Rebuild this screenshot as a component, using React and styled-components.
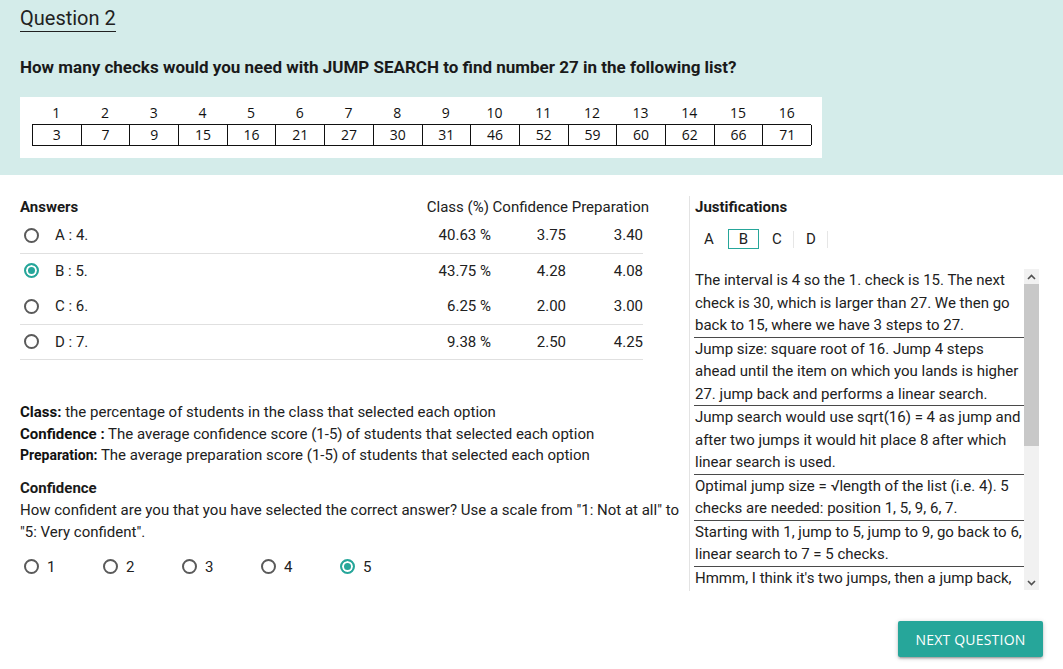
import React from "react";
import styled, { createGlobalStyle } from "styled-components";

const GlobalStyle = createGlobalStyle`
  html, body { margin: 0; padding: 0; background: #ffffff; }
  body {
    font-family: Roboto, "Noto Sans", sans-serif;
    color: #212121;
    width: 1063px;
    height: 669px;
    overflow: hidden;
  }
  * { box-sizing: border-box; }
`;

const TEAL = "#26a69a";

const Page = styled.div`
  width: 1063px;
  height: 669px;
  display: flex;
  flex-direction: column;
`;

const Band = styled.header`
  background: #d4ecea;
  padding: 6px 20px 17px;
  display: flex;
  flex-direction: column;
  align-items: flex-start;
`;

const Title = styled.h1`
  margin: 0;
  font-size: 20px;
  font-weight: 400;
  line-height: 24px;
  padding-bottom: 1px;
  border-bottom: 1px solid #212121;
  color: #212121;
`;

const QuestionText = styled.h2`
  margin: 24px 0 0;
  font-size: 17px;
  font-weight: 700;
  line-height: 22px;
  color: #1a1a1a;
`;

const ListBox = styled.div`
  margin-top: 19px;
  width: 802px;
  height: 61px;
  background: #ffffff;
  padding: 5px 11px 0 12px;
  font-family: "Open Sans", "Liberation Sans", sans-serif;
  font-size: 14px;
  color: #111;
`;

const IndexRow = styled.div`
  display: grid;
  grid-template-columns: repeat(16, 48.7px);
  height: 22px;
  line-height: 22px;
  text-align: center;
`;

const CellRow = styled.div`
  display: grid;
  grid-template-columns: repeat(16, 48.7px);
  border: 1px solid #111;
  border-right: none;
  height: 22px;
`;

const Cell = styled.div`
  border-right: 1px solid #111;
  text-align: center;
  line-height: 20px;
`;

const Main = styled.main`
  display: grid;
  grid-template-columns: 669px 354px;
  padding: 21px 0 0 20px;
`;

const LeftCol = styled.section`
  display: flex;
  flex-direction: column;
  padding-right: 4px;
`;

const HeadRow = styled.div`
  width: 627px;
  display: flex;
  justify-content: space-between;
  line-height: 22px;
  font-size: 15px;
`;

const Heading = styled.div`
  font-size: 15px;
  font-weight: 700;
  line-height: 22px;
  color: #1a1a1a;
`;

const ColHeads = styled.span`
  font-size: 15px;
  color: #212121;
  margin-right: -2px;
`;

const AnswerRow = styled.div`
  width: 623px;
  height: 35.5px;
  display: grid;
  grid-template-columns: 1fr 72px 75px 77px;
  align-items: center;
  border-bottom: 1px solid ${(p) => (p.$noLine ? "transparent" : "#e0e0e0")};
  font-size: 15px;
`;

const OptionLabel = styled.label`
  display: flex;
  align-items: center;
  gap: ${(p) => p.$gap}px;
  padding-left: 4px;
`;

const Radio = styled.span`
  width: 15px;
  height: 15px;
  border-radius: 50%;
  flex: none;
  border: 2px solid ${(p) => (p.$checked ? TEAL : "#5a5a5a")};
  background: ${(p) => (p.$checked ? TEAL : "transparent")};
  box-shadow: ${(p) => (p.$checked ? "inset 0 0 0 2px #ffffff" : "none")};
`;

const Value = styled.span`
  text-align: right;
`;

const Legend = styled.div`
  margin-top: 42px;
  font-size: 15px;
  line-height: 21.5px;
`;

const LegendLine = styled.div`
  white-space: nowrap;
`;

const LegendKey = styled.b`
  font-weight: 700;
  font-size: ${(p) => p.$size || 15}px;
  color: #111;
`;

const ConfHeading = styled(Heading)`
  margin-top: 10px;
`;

const ConfText = styled.p`
  margin: 0;
  font-size: 15px;
  line-height: 22.5px;
  padding-right: 4px;
`;

const ScaleRow = styled.div`
  margin-top: 13px;
  display: flex;
  height: 20px;
  font-size: 15px;
`;

const ScaleItem = styled(OptionLabel)`
  width: 79px;
`;

const RightCol = styled.aside`
  border-left: 1px solid #e3e3e3;
  padding-left: 4px;
  height: 395px;
  display: flex;
  flex-direction: column;
`;

const JustHeading = styled(Heading)`
  padding-left: 1px;
`;

const Tabs = styled.div`
  margin: 11px 0 0 -2px;
  display: flex;
  height: 20px;
`;

const Tab = styled.div`
  width: 34px;
  height: 20px;
  display: flex;
  align-items: center;
  justify-content: center;
  font-size: 15px;
  position: relative;
  border: 1px solid ${(p) => (p.$active ? TEAL : "transparent")};
  ${(p) => (p.$active ? "width: 31px; margin: 0 1px 0 2px;" : "")}
  &::after {
    content: "";
    display: ${(p) => (p.$sep ? "block" : "none")};
    position: absolute;
    right: -1px;
    top: 1px;
    height: 17px;
    width: 1px;
    background: #e6e6e6;
  }
`;

const ScrollFrame = styled.div`
  margin-top: 20px;
  width: 345px;
  height: 321px;
  display: flex;
`;

const ScrollContent = styled.div`
  width: 330px;
  height: 100%;
  overflow: hidden;
  font-size: 15px;
  line-height: 22.5px;
  color: #212121;
`;

const ScrollBar = styled.div`
  width: 15px;
  height: 100%;
  display: flex;
  flex-direction: column;
  background: #f1f1f1;
`;

const ScrollButton = styled.div`
  height: 15px;
  flex: none;
  display: flex;
  align-items: center;
  justify-content: center;
`;

const Track = styled.div`
  flex: 1;
  display: flex;
  flex-direction: column;
`;

const Thumb = styled.div`
  height: ${(p) => p.$size}px;
  background: #c8c8c8;
`;

const Item = styled.div`
  border-bottom: 1px solid #4a4a4a;
  padding-left: 1px;
`;

const Footer = styled.div`
  display: flex;
  justify-content: flex-end;
  padding: 30px 20px 0 0;
`;

const NextButton = styled.button`
  width: 145px;
  height: 36px;
  border: none;
  border-radius: 2px;
  background: ${TEAL};
  color: #ffffff;
  font-family: "Open Sans", "Liberation Sans", sans-serif;
  font-size: 14px;
  letter-spacing: 0.2px;
  box-shadow: 0 2px 2px 0 rgba(0,0,0,0.14), 0 3px 1px -2px rgba(0,0,0,0.12), 0 1px 5px 0 rgba(0,0,0,0.2);
  cursor: pointer;
`;

const Chevron = ({ up }) => (
  <svg width="9" height="6" viewBox="0 0 9 6">
    <path
      d={up ? "M1 5 L4.5 1.5 L8 5" : "M1 1 L4.5 4.5 L8 1"}
      fill="none"
      stroke="#505050"
      strokeWidth="1.6"
    />
  </svg>
);

const values = [3, 7, 9, 15, 16, 21, 27, 30, 31, 46, 52, 59, 60, 62, 66, 71];

const answers = [
  { key: "A", text: "4.", cls: "40.63 %", conf: "3.75", prep: "3.40" },
  { key: "B", text: "5.", cls: "43.75 %", conf: "4.28", prep: "4.08", checked: true, noLine: true },
  { key: "C", text: "6.", cls: "6.25 %", conf: "2.00", prep: "3.00" },
  { key: "D", text: "7.", cls: "9.38 %", conf: "2.50", prep: "4.25" },
];

const justifications = [
  "The interval is 4 so the 1. check is 15. The next check is 30, which is larger than 27. We then go back to 15, where we have 3 steps to 27.",
  "Jump size: square root of 16. Jump 4 steps ahead until the item on which you lands is higher 27. jump back and performs a linear search.",
  "Jump search would use sqrt(16) = 4 as jump and after two jumps it would hit place 8 after which linear search is used.",
  "Optimal jump size = \u221Alength of the list (i.e. 4). 5 checks are needed: position 1, 5, 9, 6, 7.",
  "Starting with 1, jump to 5, jump to 9, go back to 6, linear search to 7 = 5 checks.",
  "Hmmm, I think it's two jumps, then a jump back, and then a linear search up to 27.",
  "Jump 4 places each time: 15, then 30 which is too big, so go back and check 16, 21 and 27.",
  "Checks: 15, 30, 16, 21, 27. That is 5 checks in total.",
  "We jump with step size 4 and find that 27 lies between 15 and 30, then search linearly.",
  "Two jumps and three linear checks, so 5.",
];

export default function App() {
  return (
    <Page>
      <GlobalStyle />
      <Band>
        <Title>Question 2</Title>
        <QuestionText>
          How many checks would you need with JUMP SEARCH to find number 27 in the following list?
        </QuestionText>
        <ListBox>
          <IndexRow>
            {values.map((_, i) => (
              <span key={i}>{i + 1}</span>
            ))}
          </IndexRow>
          <CellRow>
            {values.map((v) => (
              <Cell key={v}>{v}</Cell>
            ))}
          </CellRow>
        </ListBox>
      </Band>

      <Main>
        <LeftCol>
          <HeadRow>
            <Heading>Answers</Heading>
            <ColHeads>Class (%) Confidence Preparation</ColHeads>
          </HeadRow>
          {answers.map((a) => (
            <AnswerRow key={a.key} $noLine={a.noLine}>
              <OptionLabel $gap={16}>
                <Radio $checked={a.checked} />
                <span>
                  {a.key} : {a.text}
                </span>
              </OptionLabel>
              <Value>{a.cls}</Value>
              <Value>{a.conf}</Value>
              <Value>{a.prep}</Value>
            </AnswerRow>
          ))}

          <Legend>
            <LegendLine>
              <LegendKey>Class:</LegendKey> the percentage of students in the class that selected each option
            </LegendLine>
            <LegendLine>
              <LegendKey>Confidence :</LegendKey> The average confidence score (1-5) of students that selected each option
            </LegendLine>
            <LegendLine>
              <LegendKey $size={14}>Preparation:</LegendKey> The average preparation score (1-5) of students that selected each option
            </LegendLine>
          </Legend>

          <ConfHeading>Confidence</ConfHeading>
          <ConfText>
            How confident are you that you have selected the correct answer? Use a scale from "1: Not at all" to "5: Very confident".
          </ConfText>
          <ScaleRow>
            {[1, 2, 3, 4, 5].map((n) => (
              <ScaleItem key={n} $gap={8}>
                <Radio $checked={n === 5} />
                <span>{n}</span>
              </ScaleItem>
            ))}
          </ScaleRow>
        </LeftCol>

        <RightCol>
          <JustHeading>Justifications</JustHeading>
          <Tabs>
            <Tab>A</Tab>
            <Tab $active>B</Tab>
            <Tab $sep>C</Tab>
            <Tab $sep>D</Tab>
          </Tabs>
          <ScrollFrame>
            <ScrollContent>
              {justifications.map((t, i) => (
                <Item key={i}>{t}</Item>
              ))}
            </ScrollContent>
            <ScrollBar>
              <ScrollButton>
                <Chevron up />
              </ScrollButton>
              <Track>
                <Thumb $size={162} />
              </Track>
              <ScrollButton>
                <Chevron />
              </ScrollButton>
            </ScrollBar>
          </ScrollFrame>
        </RightCol>
      </Main>

      <Footer>
        <NextButton>NEXT QUESTION</NextButton>
      </Footer>
    </Page>
  );
}
